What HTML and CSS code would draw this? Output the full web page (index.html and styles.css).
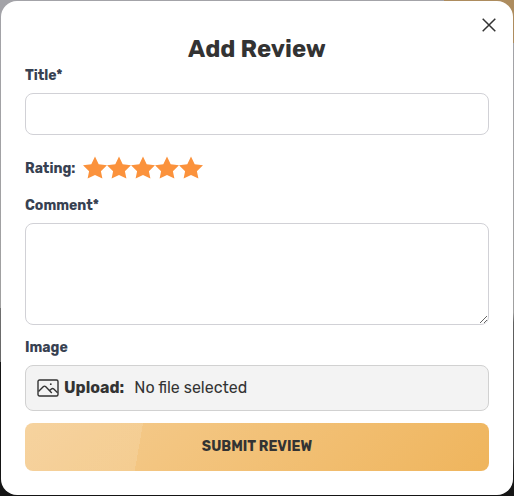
FILE: index.html
```html
<!DOCTYPE html>
<html lang="en">
<head>
<meta charset="utf-8">
<meta name="viewport" content="width=device-width, initial-scale=1">
<title>Add Review</title>
<link rel="stylesheet" href="styles.css">
</head>
<body>
<svg class="symbols" aria-hidden="true">
  <symbol id="star" viewBox="0 0 24 24"><path d="M12 .6l3.7 7.6 8.3 1.1-6.1 5.9 1.5 7.4L12 19l-7.4 3.6 1.5-7.4L0 9.3l8.3-1.1z"/></symbol>
</svg>
<main class="modal" role="dialog" aria-labelledby="heading">
  <button class="close" type="button" aria-label="Close">
    <svg viewBox="0 0 14 14"><path d="M.7.7l12.6 12.6M13.3.7L.7 13.3"/></svg>
  </button>
  <h1 class="heading" id="heading">Add Review</h1>
  <form class="form">
    <div class="field">
      <label class="label" for="title">Title*</label>
      <input class="control" id="title" type="text">
    </div>
    <div class="rating" role="group" aria-labelledby="rating-label">
      <span class="label" id="rating-label">Rating:</span>
      <div class="stars">
        <button class="star" type="button" aria-label="1 star"><svg><use href="#star"/></svg></button>
        <button class="star" type="button" aria-label="2 stars"><svg><use href="#star"/></svg></button>
        <button class="star" type="button" aria-label="3 stars"><svg><use href="#star"/></svg></button>
        <button class="star" type="button" aria-label="4 stars"><svg><use href="#star"/></svg></button>
        <button class="star" type="button" aria-label="5 stars"><svg><use href="#star"/></svg></button>
      </div>
    </div>
    <div class="field">
      <label class="label" for="comment">Comment*</label>
      <textarea class="control comment" id="comment"></textarea>
    </div>
    <div class="field">
      <label class="label" for="image">Image</label>
      <label class="upload">
        <input class="file" id="image" type="file">
        <svg class="picture" viewBox="0 0 22 18" aria-hidden="true">
          <rect x="1" y="1" width="20" height="16" rx="1.5"/>
          <path d="M1.5 12.5L6.2 7.8q1.3-1.3 2.6 0l6 6.2M12.8 11.6l1.6-1.5q1.2-1.1 2.4 0l3.8 3.6"/>
          <circle cx="13.8" cy="5.2" r=".9"/>
        </svg>
        <span class="upload-name">Upload:</span>
        <span class="upload-status">No file selected</span>
      </label>
    </div>
    <button class="submit" type="submit">SUBMIT REVIEW</button>
  </form>
</main>
</body>
</html>
```
FILE: styles.css
```css
* {
  box-sizing: border-box;
}

body {
  margin: 0;
  padding: 1px;
  min-height: 100vh;
  font-family: Rubik, Roboto, sans-serif;
  color: #333;
  background:
    linear-gradient(#ad8c5e, #ad8c5e) right top / 70px 43px no-repeat,
    linear-gradient(#a3a3a8 0%, #a0a0a0 62%, #707070 62%, #666 73%, transparent 73%) left top / 50% 100% no-repeat,
    linear-gradient(#a3a3a8 0%, #a0a0a0 63%, #606060 65%, #444 92%, #151515 96%);
}

body::after {
  content: "";
  position: fixed;
  z-index: -1;
  inset: 73% 50% 0 0;
  background: #151515;
}

button,
input,
textarea {
  font: inherit;
  color: inherit;
}

.symbols {
  position: absolute;
  width: 0;
  height: 0;
}

.modal {
  position: relative;
  padding: 32px 24px 24px;
  border-radius: 16px;
  background: #fff;
}

.close {
  position: absolute;
  top: 12px;
  right: 12px;
  display: flex;
  padding: 5px;
  border: 0;
  background: none;
}

.close svg {
  width: 14px;
  height: 14px;
  fill: none;
  stroke: #333;
  stroke-width: 1.5;
}

.heading {
  margin: 0;
  font-size: 24px;
  line-height: 32px;
  font-weight: 700;
  text-align: center;
}

.form {
  display: flex;
  flex-direction: column;
  gap: 12px;
}

.field {
  display: flex;
  flex-direction: column;
  gap: 6px;
}

.label {
  font-size: 14px;
  line-height: 22px;
  font-weight: 700;
  color: #374151;
}

.control {
  display: block;
  width: 100%;
  height: 42px;
  padding: 8px 12px;
  border: 1px solid #d1d1d6;
  border-radius: 8px;
  background: #fff;
}

.comment {
  height: 102px;
  resize: vertical;
}

.rating {
  display: flex;
  align-items: flex-end;
  gap: 8px;
  padding: 9px 0 3px;
}

.stars {
  display: flex;
}

.star {
  display: flex;
  padding: 0;
  border: 0;
  background: none;
}

.star svg {
  width: 24px;
  height: 24px;
  fill: #fb923c;
}

.upload {
  position: relative;
  display: flex;
  align-items: center;
  height: 46px;
  padding: 0 11px;
  border: 1px solid #d1d1d1;
  border-radius: 8px;
  background: #f3f3f3;
  font-size: 16px;
  line-height: 24px;
}

.file {
  position: absolute;
  width: 1px;
  height: 1px;
  opacity: 0;
}

.picture {
  width: 22px;
  height: 18px;
  margin-right: 5px;
  fill: none;
  stroke: #333;
  stroke-width: 1.4;
}

.picture circle {
  fill: #333;
  stroke: none;
}

.upload-name {
  margin-right: 10px;
  font-weight: 700;
}

.submit {
  height: 48px;
  padding: 0;
  border: 0;
  border-radius: 8px;
  font-size: 14px;
  line-height: 22px;
  font-weight: 700;
  background:
    linear-gradient(100deg, rgba(255, 255, 255, 0.12) 25%, transparent 25%),
    linear-gradient(135deg, #f5cd92, #efb55d);
}
```
